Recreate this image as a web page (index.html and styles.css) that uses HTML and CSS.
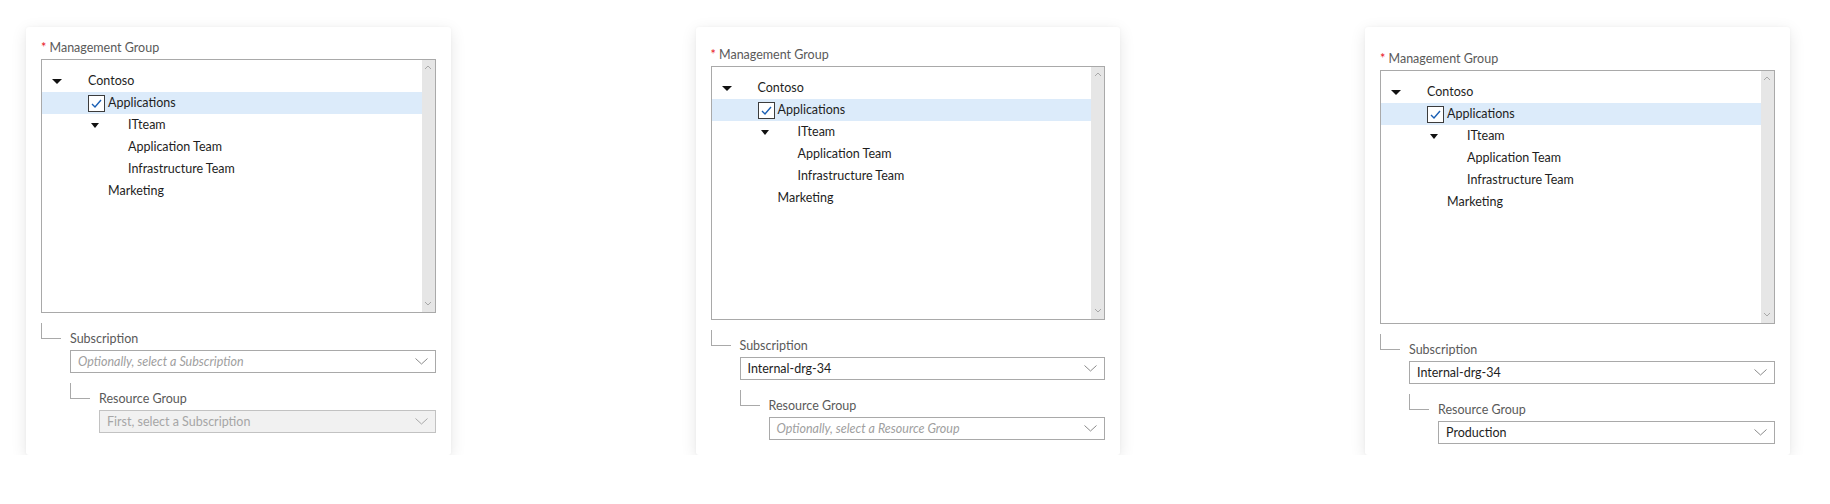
FILE: index.html
```html
<!DOCTYPE html>
<html lang="en">
<head>
<meta charset="utf-8">
<title>Management Group scope picker</title>
<link rel="stylesheet" href="styles.css">
</head>
<body>
<main class="stage">

  <section class="card card-a">
    <div class="label"><span class="req">*</span> Management Group</div>
    <div class="tree">
      <div class="tree-list">
        <div class="row r-contoso"><span class="twisty"></span><span>Contoso</span></div>
        <div class="row r-apps selected"><span class="check"><svg viewBox="0 0 17 17" width="17" height="17"><polyline points="4,9 7,12 13,5" fill="none" stroke="#1a5fb4" stroke-width="1.4"/></svg></span><span>Applications</span></div>
        <div class="row r-it"><span class="twisty twisty-it"></span><span>ITteam</span></div>
        <div class="row r-leaf">Application Team</div>
        <div class="row r-leaf">Infrastructure Team</div>
        <div class="row r-mkt">Marketing</div>
      </div>
      <div class="scrollbar">
        <svg class="sb-up" viewBox="0 0 8 5" width="8" height="5"><polyline points="1,4 4,1 7,4" fill="none" stroke="#a8a8a8" stroke-width="1"/></svg>
        <svg class="sb-down" viewBox="0 0 8 5" width="8" height="5"><polyline points="1,1 4,4 7,1" fill="none" stroke="#a8a8a8" stroke-width="1"/></svg>
      </div>
    </div>
    <div class="branch">
      <span class="elbow"></span>
      <div class="branch-body">
        <div class="sublabel">Subscription</div>
        <div class="select"><span class="ph">Optionally, select a Subscription</span><svg class="chev" viewBox="0 0 13 7" width="13" height="7"><polyline points="0.5,0.5 6.5,6 12.5,0.5" fill="none" stroke="#8a8a8a" stroke-width="1"/></svg></div>
        <div class="branch">
          <span class="elbow"></span>
          <div class="branch-body">
            <div class="sublabel">Resource Group</div>
            <div class="select disabled"><span class="dis">First, select a Subscription</span><svg class="chev" viewBox="0 0 13 7" width="13" height="7"><polyline points="0.5,0.5 6.5,6 12.5,0.5" fill="none" stroke="#a8a8a8" stroke-width="1"/></svg></div>
          </div>
        </div>
      </div>
    </div>
  </section>

  <section class="card card-b">
    <div class="label"><span class="req">*</span> Management Group</div>
    <div class="tree">
      <div class="tree-list">
        <div class="row r-contoso"><span class="twisty"></span><span>Contoso</span></div>
        <div class="row r-apps selected"><span class="check"><svg viewBox="0 0 17 17" width="17" height="17"><polyline points="4,9 7,12 13,5" fill="none" stroke="#1a5fb4" stroke-width="1.4"/></svg></span><span>Applications</span></div>
        <div class="row r-it"><span class="twisty twisty-it"></span><span>ITteam</span></div>
        <div class="row r-leaf">Application Team</div>
        <div class="row r-leaf">Infrastructure Team</div>
        <div class="row r-mkt">Marketing</div>
      </div>
      <div class="scrollbar">
        <svg class="sb-up" viewBox="0 0 8 5" width="8" height="5"><polyline points="1,4 4,1 7,4" fill="none" stroke="#a8a8a8" stroke-width="1"/></svg>
        <svg class="sb-down" viewBox="0 0 8 5" width="8" height="5"><polyline points="1,1 4,4 7,1" fill="none" stroke="#a8a8a8" stroke-width="1"/></svg>
      </div>
    </div>
    <div class="branch">
      <span class="elbow"></span>
      <div class="branch-body">
        <div class="sublabel">Subscription</div>
        <div class="select"><span class="val">Internal-drg-34</span><svg class="chev" viewBox="0 0 13 7" width="13" height="7"><polyline points="0.5,0.5 6.5,6 12.5,0.5" fill="none" stroke="#8a8a8a" stroke-width="1"/></svg></div>
        <div class="branch">
          <span class="elbow"></span>
          <div class="branch-body">
            <div class="sublabel">Resource Group</div>
            <div class="select"><span class="ph">Optionally, select a Resource Group</span><svg class="chev" viewBox="0 0 13 7" width="13" height="7"><polyline points="0.5,0.5 6.5,6 12.5,0.5" fill="none" stroke="#8a8a8a" stroke-width="1"/></svg></div>
          </div>
        </div>
      </div>
    </div>
  </section>

  <section class="card card-c">
    <div class="label"><span class="req">*</span> Management Group</div>
    <div class="tree">
      <div class="tree-list">
        <div class="row r-contoso"><span class="twisty"></span><span>Contoso</span></div>
        <div class="row r-apps selected"><span class="check"><svg viewBox="0 0 17 17" width="17" height="17"><polyline points="4,9 7,12 13,5" fill="none" stroke="#1a5fb4" stroke-width="1.4"/></svg></span><span>Applications</span></div>
        <div class="row r-it"><span class="twisty twisty-it"></span><span>ITteam</span></div>
        <div class="row r-leaf">Application Team</div>
        <div class="row r-leaf">Infrastructure Team</div>
        <div class="row r-mkt">Marketing</div>
      </div>
      <div class="scrollbar">
        <svg class="sb-up" viewBox="0 0 8 5" width="8" height="5"><polyline points="1,4 4,1 7,4" fill="none" stroke="#a8a8a8" stroke-width="1"/></svg>
        <svg class="sb-down" viewBox="0 0 8 5" width="8" height="5"><polyline points="1,1 4,4 7,1" fill="none" stroke="#a8a8a8" stroke-width="1"/></svg>
      </div>
    </div>
    <div class="branch">
      <span class="elbow"></span>
      <div class="branch-body">
        <div class="sublabel">Subscription</div>
        <div class="select"><span class="val">Internal-drg-34</span><svg class="chev" viewBox="0 0 13 7" width="13" height="7"><polyline points="0.5,0.5 6.5,6 12.5,0.5" fill="none" stroke="#8a8a8a" stroke-width="1"/></svg></div>
        <div class="branch">
          <span class="elbow"></span>
          <div class="branch-body">
            <div class="sublabel">Resource Group</div>
            <div class="select"><span class="val">Production</span><svg class="chev" viewBox="0 0 13 7" width="13" height="7"><polyline points="0.5,0.5 6.5,6 12.5,0.5" fill="none" stroke="#8a8a8a" stroke-width="1"/></svg></div>
          </div>
        </div>
      </div>
    </div>
  </section>

</main>
</body>
</html>
```

FILE: styles.css
```css
* { box-sizing: border-box; }

html, body {
  margin: 0;
  padding: 0;
  background: #ffffff;
}

body {
  font-family: Lato, "Noto Sans", "DejaVu Sans", sans-serif;
  font-size: 12.5px;
  color: #222222;
}

.stage {
  display: flex;
  gap: 245px;
  padding: 27px 0 0 26px;
}

.card {
  width: 424.5px;
  height: 428px;
  background: #ffffff;
  border-radius: 3px;
  box-shadow: 0 4px 16px rgba(0, 0, 0, 0.1), 0 0 3px rgba(0, 0, 0, 0.04);
  padding: 13px 15px 0 15px;
}

.card-b { padding-top: 20px; }
.card-c { padding-top: 24px; }

.label {
  height: 16px;
  line-height: 16px;
  margin-bottom: 3px;
  color: #5a5a5a;
}

.req {
  color: #e81123;
}

.tree {
  height: 254px;
  border: 1px solid #a9a9a9;
  display: flex;
}

.tree-list {
  flex: 1;
  padding-top: 10px;
}

.row {
  height: 22px;
  line-height: 22px;
  display: flex;
  align-items: center;
  white-space: nowrap;
  color: #1e1e1e;
}

.row.selected {
  background: #dcebfa;
}

.r-contoso { padding-left: 10px; }
.r-apps { padding-left: 46px; }
.r-it { padding-left: 49px; }
.r-leaf { padding-left: 86px; }
.r-mkt { padding-left: 66px; }

.twisty {
  flex: 0 0 36px;
  height: 22px;
  position: relative;
}

.twisty::before {
  content: "";
  position: absolute;
  left: 0;
  top: 9px;
  border-left: 5px solid transparent;
  border-right: 5px solid transparent;
  border-top: 5px solid #111111;
}

.twisty-it {
  flex-basis: 37px;
}

.twisty-it::before {
  border-left-width: 4.5px;
  border-right-width: 4.5px;
}

.check {
  flex: 0 0 17px;
  width: 17px;
  height: 17px;
  border: 1px solid #3c3c3c;
  background: #ffffff;
  margin-right: 3px;
  display: flex;
  align-items: center;
  justify-content: center;
}

.check svg {
  display: block;
  flex: 0 0 auto;
}

.scrollbar {
  flex: 0 0 13px;
  background: #e6e6e6;
  display: flex;
  flex-direction: column;
  justify-content: space-between;
  align-items: center;
  padding: 5px 0 6px;
}

.scrollbar svg { display: block; }

.branch {
  display: flex;
  margin-top: 10px;
}

.elbow {
  flex: 0 0 20px;
  height: 16px;
  border-left: 1px solid #a9a9a9;
  border-bottom: 1px solid #a9a9a9;
  margin-right: 9px;
}

.branch-body {
  flex: 1;
  padding-top: 8px;
  min-width: 0;
}

.sublabel {
  height: 16px;
  line-height: 16px;
  color: #5a5a5a;
  margin-bottom: 3px;
}

.select {
  height: 23px;
  border: 1px solid #a9a9a9;
  background: #ffffff;
  display: flex;
  align-items: center;
  justify-content: space-between;
  padding: 0 7px 0 7px;
}

.select.disabled {
  background: #f1f1f1;
  border-color: #c2c2c2;
}

.ph {
  font-style: italic;
  color: #a0a0a0;
}

.dis {
  color: #a6a6a6;
}

.val {
  color: #1e1e1e;
}

.chev { display: block; flex: 0 0 auto; }
```
